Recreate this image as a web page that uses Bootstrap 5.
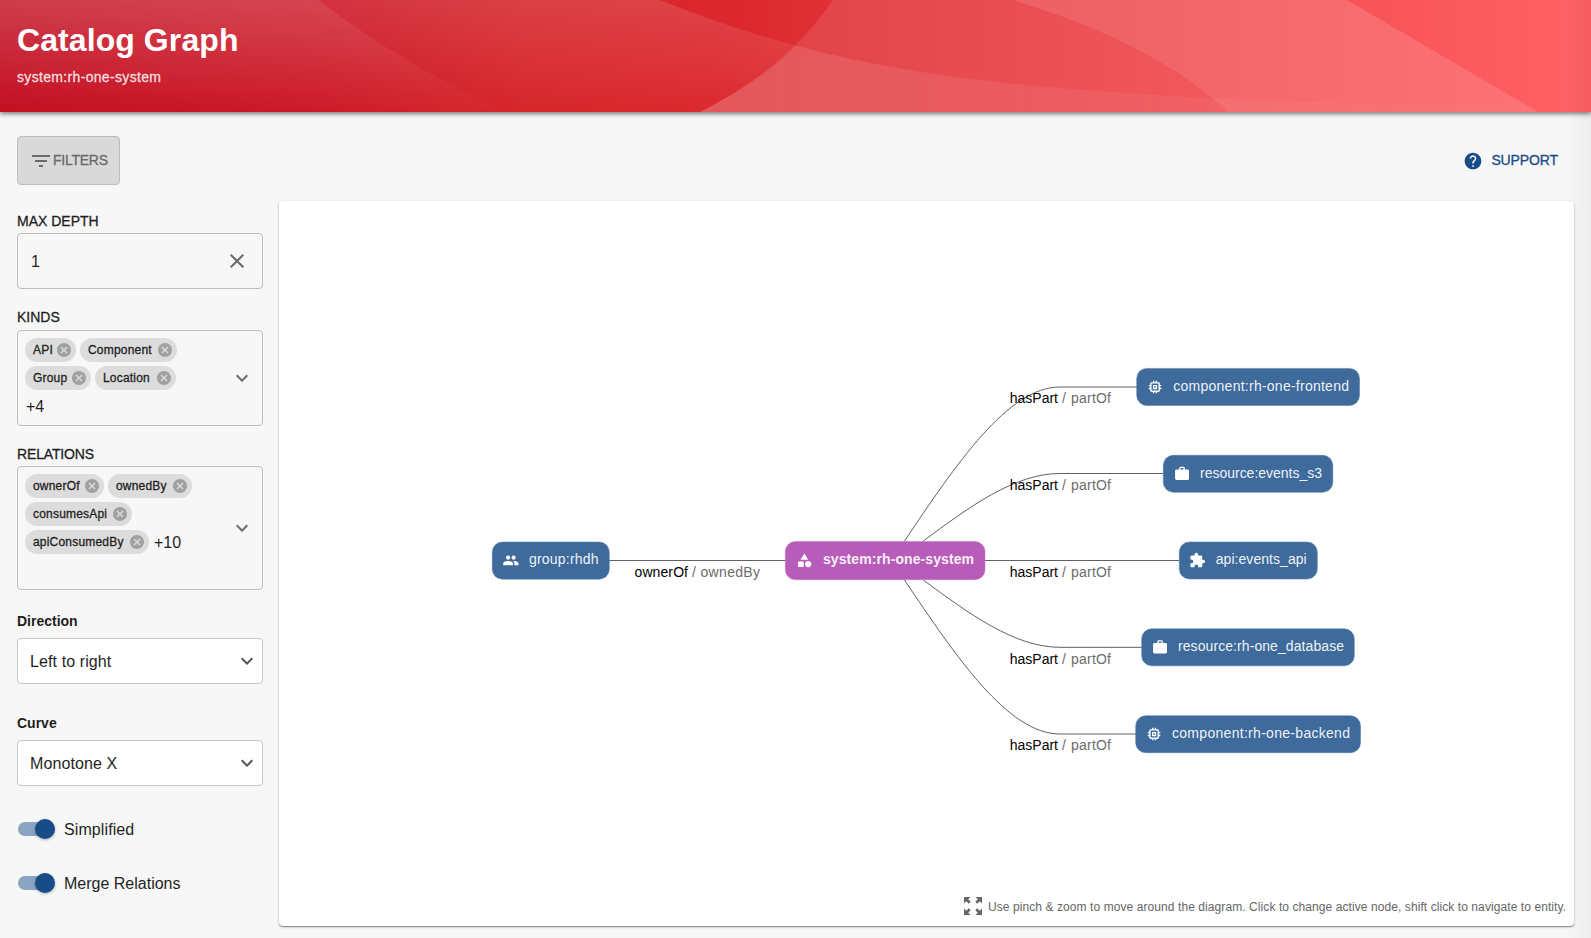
<!DOCTYPE html>
<html lang="en">
<head>
<meta charset="utf-8">
<meta name="viewport" content="width=device-width, initial-scale=1">
<title>Catalog Graph</title>
<link rel="stylesheet" href="https://cdn.jsdelivr.net/npm/bootstrap@5.3.0/dist/css/bootstrap.min.css">
<style>
body{font-family:"Liberation Sans",Arial,sans-serif;background:#f7f7f7;color:#1f1f1f;height:938px;overflow:hidden;font-size:16px}
.page-head{height:112px;padding:22px 17px 0;box-shadow:0 2px 4px rgba(0,0,0,.35),0 1px 6px rgba(0,0,0,.25);z-index:2}
.page-head .waves{position:absolute;inset:0;width:100%;height:100%}
.page-head h1{font-size:32px;line-height:36px;letter-spacing:.08px}
.page-head .sub-title{font-size:14px;line-height:20px;margin-top:9px;color:rgba(255,255,255,.8);letter-spacing:.33px}
.medium{-webkit-text-stroke:.3px currentColor}
.toolbar-row{padding:24px 17px 0;height:88px}
.btn-filters{width:103px;height:49px;background:#d9d9d9;border:1px solid #bdbdbd;border-radius:4px;color:#6a6a6a;font-size:14px;padding:0 0 0 11px;letter-spacing:-.25px}
.btn-filters:hover{background:#d9d9d9;color:#6a6a6a}
.btn-support{color:#184c87;font-size:14px;height:49px;padding:0 16px 0 0;letter-spacing:-.12px}
.side-col{width:246px;margin-left:17px;flex:none}
.field-label{font-size:14px;line-height:20px;display:block}
.tight{letter-spacing:-.15px}
.outline-box{border:1px solid #bcbcbc;border-radius:4px;position:relative}
.chip{height:24px;border-radius:12px;background:#dcdcdc;font-size:12px;padding:0 5px 0 8px;color:#1f1f1f;letter-spacing:.2px}
.chip svg{width:14px;height:14px}
.chip-rows{padding:7px 0 0 7px;gap:4px}
.more{font-size:16px;line-height:26px;height:24px;margin-left:1px}
.native{height:46px;border:1px solid #c3c9d0;border-radius:4px;background:#fff;padding:0 3px 0 12px}
.native span,.switch-label,.depth{padding-top:2px;letter-spacing:.1px}
.switch-track{width:34px;height:14px;border-radius:7px;background:#8ba4c2;position:relative;margin-left:1px}
.switch-thumb{position:absolute;left:17px;top:-3px;width:20px;height:20px;border-radius:50%;background:#184c87;box-shadow:0 1px 3px rgba(0,0,0,.3)}
.graph-card{margin-left:16px;width:1295px;height:725px;background:#fff;border-radius:4px;box-shadow:0 1px 1px rgba(0,0,0,.35),0 1px 3px rgba(0,0,0,.2)}
.graph-card svg{display:block}
.edge-shade{position:absolute;top:0;right:0;width:26px;height:938px;background:linear-gradient(90deg,transparent,rgba(0,0,0,.045));z-index:3;pointer-events:none}
.node rect{fill:#3f6b9c;stroke:#4d76a4;stroke-width:.5}
.node text,.elabel{font-size:14px}
.node text{fill:#fff;fill-opacity:.93}
.node path{fill:#fff}
.edges path{fill:none;stroke:#616161;stroke-width:1}
.elabel{fill:#6c6c6c}
.elabel .fw{fill:#000}
</style>
</head>
<body>
<svg width="0" height="0" class="position-absolute">
<defs>
<symbol id="x-circle" viewBox="2 2 20 20"><path fill="#a1a1a1" d="M12 2C6.47 2 2 6.47 2 12s4.47 10 10 10 10-4.47 10-10S17.53 2 12 2zm5 13.59L15.59 17 12 13.41 8.41 17 7 15.59 10.59 12 7 8.41 8.41 7 12 10.59 15.59 7 17 8.41 13.41 12 17 15.59z"/></symbol>
<symbol id="chev" viewBox="0 0 24 24"><path fill="currentColor" d="M7.41 8.59 12 13.17l4.59-4.58L18 10l-6 6-6-6 1.41-1.41z"/></symbol>
<symbol id="i-memory" viewBox="0 0 24 24"><path d="M15 9H9v6h6V9zm-2 4h-2v-2h2v2zm8-2V9h-2V7c0-1.100-.9-2-2-2h-2V3h-2v2h-2V3H9v2H7c-1.100 0-2 .9-2 2v2H3v2h2v2H3v2h2v2c0 1.100.9 2 2 2h2v2h2v-2h2v2h2v-2h2c1.100 0 2-.9 2-2v-2h2v-2h-2v-2h2zm-4 6H7V7h10v10z"/></symbol>
<symbol id="i-work" viewBox="0 0 24 24"><path d="M20 6h-4V4c0-1.110-.89-2-2-2h-4c-1.110 0-2 .89-2 2v2H4c-1.110 0-1.990.89-1.990 2L2 19c0 1.110.89 2 2 2h16c1.110 0 2-.89 2-2V8c0-1.110-.89-2-2-2zm-6 0h-4V4h4v2z"/></symbol>
<symbol id="i-ext" viewBox="0 0 24 24"><path d="M20.5 11H19V7c0-1.100-.9-2-2-2h-4V3.500C13 2.120 11.880 1 10.500 1S8 2.120 8 3.500V5H4c-1.100 0-1.990.9-1.990 2v3.800H3.500c1.490 0 2.700 1.210 2.700 2.700s-1.210 2.700-2.700 2.700H2V20c0 1.100.9 2 2 2h3.800v-1.500c0-1.490 1.210-2.700 2.700-2.700 1.490 0 2.700 1.210 2.700 2.700V22H17c1.100 0 2-.9 2-2v-4h1.500c1.380 0 2.500-1.120 2.500-2.500S21.880 11 20.500 11z"/></symbol>
<symbol id="i-people" viewBox="0 0 24 24"><path d="M16 11c1.660 0 2.990-1.340 2.990-3S17.660 5 16 5c-1.660 0-3 1.340-3 3s1.340 3 3 3zm-8 0c1.660 0 2.990-1.340 2.990-3S9.660 5 8 5C6.340 5 5 6.340 5 8s1.340 3 3 3zm0 2c-2.330 0-7 1.170-7 3.500V19h14v-2.500c0-2.330-4.670-3.500-7-3.500zm8 0c-.29 0-.62.020-.97.050 1.160.84 1.970 1.970 1.970 3.450V19h6v-2.500c0-2.330-4.670-3.500-7-3.500z"/></symbol>
<symbol id="i-cat" viewBox="0 0 24 24"><path d="M12 2l-5.500 9h11z"/><path d="M17.500 13a4.500 4.500 0 1 0 .01 0zM3 13.500h8v8H3z"/></symbol>
</defs>
</svg>

<header class="page-head position-relative text-white">
<svg class="waves" viewBox="0 0 1591 112" preserveAspectRatio="none">
<defs>
<linearGradient id="base"><stop offset="0" stop-color="#c2091c"/><stop offset=".2" stop-color="#cc1423"/><stop offset=".33" stop-color="#d62429"/><stop offset=".45" stop-color="#db272d"/><stop offset=".67" stop-color="#ea4347"/><stop offset=".88" stop-color="#f9565a"/><stop offset="1" stop-color="#ff6266"/></linearGradient>
<linearGradient id="ga" x1="0" y1="0" x2="0" y2="1"><stop offset="0" stop-color="#fff" stop-opacity=".09"/><stop offset="1" stop-color="#fff" stop-opacity=".015"/></linearGradient>
<linearGradient id="gb" x1="0" y1="0" x2="0" y2="1"><stop offset="0" stop-color="#fff" stop-opacity=".13"/><stop offset="1" stop-color="#fff" stop-opacity=".01"/></linearGradient>
<linearGradient id="gc" gradientUnits="userSpaceOnUse" x1="700" y1="0" x2="1538" y2="0"><stop offset="0" stop-color="#fff" stop-opacity=".12"/><stop offset=".45" stop-color="#fff" stop-opacity=".07"/><stop offset="1" stop-color="#fff" stop-opacity=".08"/></linearGradient>
<linearGradient id="gs" gradientUnits="userSpaceOnUse" x1="700" y1="0" x2="1538" y2="0"><stop offset="0" stop-color="#fff" stop-opacity=".13"/><stop offset=".4" stop-color="#fff" stop-opacity=".07"/><stop offset="1" stop-color="#fff" stop-opacity=".01"/></linearGradient>
<linearGradient id="gd" gradientUnits="userSpaceOnUse" x1="1013" y1="0" x2="1538" y2="0"><stop offset="0" stop-color="#fff" stop-opacity=".11"/><stop offset="1" stop-color="#fff" stop-opacity=".05"/></linearGradient>
</defs>
<rect width="1591" height="112" fill="url(#base)"/>
<path fill="url(#ga)" d="M0 0H318Q407 67 505 112H0z"/>
<path fill="url(#gb)" d="M0 0H660Q729 28 797 46Q762 81 700 112H0z"/>
<path fill="url(#gc)" d="M833 0H1347L1538 112H700Q787 68 833 0z"/>
<path fill="url(#gs)" d="M797 46Q908 76 1060 88Q1270 106 1520 104L1538 112H700Q762 81 797 46z"/>
<path fill="url(#gd)" d="M1013 0H1347L1538 112H1228Q1155 43 1013 0z"/>
</svg>
<div class="position-relative">
<h1 class="fw-bold mb-0">Catalog Graph</h1>
<div class="sub-title medium">system:rh-one-system</div>
</div>
</header>

<div class="toolbar-row d-flex justify-content-between align-items-start">
<button class="btn btn-filters d-flex align-items-center medium" type="button"><svg width="24" height="24" fill="currentColor" viewBox="0 0 24 24"><path d="M10 18h4v-2h-4v2zM3 6v2h18V6H3zm3 7h12v-2H6v2z"/></svg><span>FILTERS</span></button>
<button class="btn btn-support border-0 d-flex align-items-center gap-2 medium" type="button"><svg width="20" height="20" fill="currentColor" viewBox="0 0 24 24"><path d="M12 2C6.480 2 2 6.480 2 12s4.480 10 10 10 10-4.480 10-10S17.520 2 12 2zm1 17h-2v-2h2v2zm2.070-7.750l-.9.920C13.450 12.900 13 13.500 13 15h-2v-.5c0-1.100.45-2.100 1.170-2.830l1.240-1.260c.37-.36.59-.86.59-1.410 0-1.100-.9-2-2-2s-2 .9-2 2H8c0-2.210 1.790-4 4-4s4 1.790 4 4c0 .88-.36 1.680-.93 2.250z"/></svg><span>SUPPORT</span></button>
</div>

<main class="d-flex">
<aside class="side-col">
<span class="field-label medium" style="margin-top:11px">MAX DEPTH</span>
<div class="outline-box d-flex align-items-center justify-content-between" style="height:56px;margin-top:2px;padding:0 13px"><span class="depth">1</span><svg width="24" height="24" viewBox="0 0 24 24" fill="#6a6a6a"><path d="M19 6.410 17.590 5 12 10.590 6.410 5 5 6.410 10.590 12 5 17.590 6.410 19 12 13.410 17.590 19 19 17.590 13.410 12z"/></svg></div>

<span class="field-label medium" style="margin-top:18px">KINDS</span>
<div class="outline-box d-flex justify-content-between align-items-center" style="height:96px;margin-top:3px">
<div class="chip-rows d-flex flex-column align-self-start">
<div class="d-flex gap-1"><span class="chip medium d-flex align-items-center justify-content-between" style="width:51px">API<svg><use href="#x-circle"/></svg></span><span class="chip medium d-flex align-items-center justify-content-between" style="width:97px">Component<svg><use href="#x-circle"/></svg></span></div>
<div class="d-flex gap-1"><span class="chip medium d-flex align-items-center justify-content-between" style="width:66px">Group<svg><use href="#x-circle"/></svg></span><span class="chip medium d-flex align-items-center justify-content-between" style="width:81px">Location<svg><use href="#x-circle"/></svg></span></div>
<span class="more">+4</span>
</div>
<svg width="24" height="24" style="margin-right:8px;color:#6a6a6a"><use href="#chev"/></svg>
</div>

<span class="field-label medium tight" style="margin-top:18px">RELATIONS</span>
<div class="outline-box d-flex justify-content-between align-items-center" style="height:124px;margin-top:2px">
<div class="chip-rows d-flex flex-column align-self-start">
<div class="d-flex gap-1"><span class="chip medium d-flex align-items-center justify-content-between" style="width:79px">ownerOf<svg><use href="#x-circle"/></svg></span><span class="chip medium d-flex align-items-center justify-content-between" style="width:84px">ownedBy<svg><use href="#x-circle"/></svg></span></div>
<div class="d-flex"><span class="chip medium d-flex align-items-center justify-content-between" style="width:107px">consumesApi<svg><use href="#x-circle"/></svg></span></div>
<div class="d-flex gap-1"><span class="chip medium d-flex align-items-center justify-content-between" style="width:124px">apiConsumedBy<svg><use href="#x-circle"/></svg></span><span class="more">+10</span></div>
</div>
<svg width="24" height="24" style="margin-right:8px;color:#6a6a6a"><use href="#chev"/></svg>
</div>

<span class="field-label fw-bold" style="margin-top:21px">Direction</span>
<div class="native d-flex justify-content-between align-items-center" style="margin-top:7px"><span>Left to right</span><svg width="24" height="24" style="color:#555"><use href="#chev"/></svg></div>
<span class="field-label fw-bold" style="margin-top:29px">Curve</span>
<div class="native d-flex justify-content-between align-items-center" style="margin-top:7px"><span>Monotone X</span><svg width="24" height="24" style="color:#555"><use href="#chev"/></svg></div>

<div class="d-flex align-items-center" style="margin-top:31px;height:24px"><span class="switch-track"><span class="switch-thumb"></span></span><span class="switch-label" style="margin-left:12px">Simplified</span></div>
<div class="d-flex align-items-center" style="margin-top:30px;height:24px"><span class="switch-track"><span class="switch-thumb"></span></span><span class="switch-label" style="margin-left:12px;letter-spacing:0">Merge Relations</span></div>
</aside>

<section class="graph-card" style="margin-top:1px">
<svg width="1295" height="725" viewBox="279 201 1295 725">
<g class="edges">
<path d="M609 560.500H785M985 560.500H1179"/>
<path d="M904.500 541C956.300 464 1008 387 1060 387H1137"/>
<path d="M923.300 541C968.900 507.200 1014.400 473.500 1060 473.500H1163"/>
<path d="M923.300 580C968.900 613.500 1014.400 647.300 1060 647.300H1142"/>
<path d="M904.500 580C956.300 657 1008 734 1060 734H1136"/>
</g>
<g class="elabel">
<text y="577"><tspan class="fw" x="634.500" textLength="53.500">ownerOf</tspan><tspan x="692">/</tspan><tspan x="700.500" textLength="59.500">ownedBy</tspan></text>
<text y="403.300"><tspan class="fw" x="1009.700" textLength="48.300">hasPart</tspan><tspan x="1062">/</tspan><tspan x="1071" textLength="40">partOf</tspan></text>
<text y="490"><tspan class="fw" x="1009.700" textLength="48.300">hasPart</tspan><tspan x="1062">/</tspan><tspan x="1071" textLength="40">partOf</tspan></text>
<text y="577"><tspan class="fw" x="1009.700" textLength="48.300">hasPart</tspan><tspan x="1062">/</tspan><tspan x="1071" textLength="40">partOf</tspan></text>
<text y="664"><tspan class="fw" x="1009.700" textLength="48.300">hasPart</tspan><tspan x="1062">/</tspan><tspan x="1071" textLength="40">partOf</tspan></text>
<text y="750"><tspan class="fw" x="1009.700" textLength="48.300">hasPart</tspan><tspan x="1062">/</tspan><tspan x="1071" textLength="40">partOf</tspan></text>
</g>
<g class="node" fill="#fff">
<rect x="492.300" y="542" width="117" height="37.200" rx="10"/><use href="#i-people" x="502.500" y="552" width="16.700" height="16.700"/><text x="529" y="564.300" textLength="69.500">group:rhdh</text>
<rect x="785.300" y="541.500" width="199.700" height="38.200" rx="10" style="fill:#b85cba;stroke:#c373c5"/><use href="#i-cat" x="796" y="552" width="16.700" height="16.700"/><text x="823" y="564.300" textLength="151" font-weight="700">system:rh-one-system</text>
<rect x="1136.700" y="368.400" width="222.800" height="37" rx="10"/><use href="#i-memory" x="1146.700" y="378.700" width="16.700" height="16.700"/><text x="1173.300" y="391" textLength="175.700">component:rh-one-frontend</text>
<rect x="1163.300" y="455.300" width="169.500" height="37" rx="10"/><use href="#i-work" x="1173.700" y="465.300" width="16.700" height="16.700"/><text x="1200" y="477.500" textLength="122">resource:events_s3</text>
<rect x="1179.300" y="542" width="138" height="37" rx="10"/><use href="#i-ext" x="1189" y="552" width="16.700" height="16.700"/><text x="1215.700" y="564.300" textLength="91">api:events_api</text>
<rect x="1141.700" y="628.800" width="212.600" height="37" rx="10"/><use href="#i-work" x="1151.700" y="638.800" width="16.700" height="16.700"/><text x="1178" y="651.300" textLength="166">resource:rh-one_database</text>
<rect x="1135.700" y="715.700" width="224.800" height="37" rx="10"/><use href="#i-memory" x="1145.700" y="725.700" width="16.700" height="16.700"/><text x="1172" y="738" textLength="178">component:rh-one-backend</text>
</g>
<g fill="#666"><path transform="translate(961 894)" d="M14.500 3l2.300 2.300-2.500 2.500 1.900 1.900 2.500-2.500L21 9.500V3zM3 9.500l2.300-2.300 2.500 2.500 1.900-1.900-2.500-2.500L9.500 3H3zM9.500 21l-2.300-2.300 2.500-2.500-1.900-1.900-2.500 2.500L3 14.500V21zM21 14.500l-2.300 2.300-2.500-2.500-1.900 1.900 2.500 2.500L14.500 21H21z"/>
<text x="988" y="911" font-size="12" textLength="578">Use pinch &amp; zoom to move around the diagram. Click to change active node, shift click to navigate to entity.</text></g>
</svg>
</section>
</main>
<div class="edge-shade"></div>
<script src="https://cdn.jsdelivr.net/npm/bootstrap@5.3.0/dist/js/bootstrap.bundle.min.js"></script>
</body>
</html>
